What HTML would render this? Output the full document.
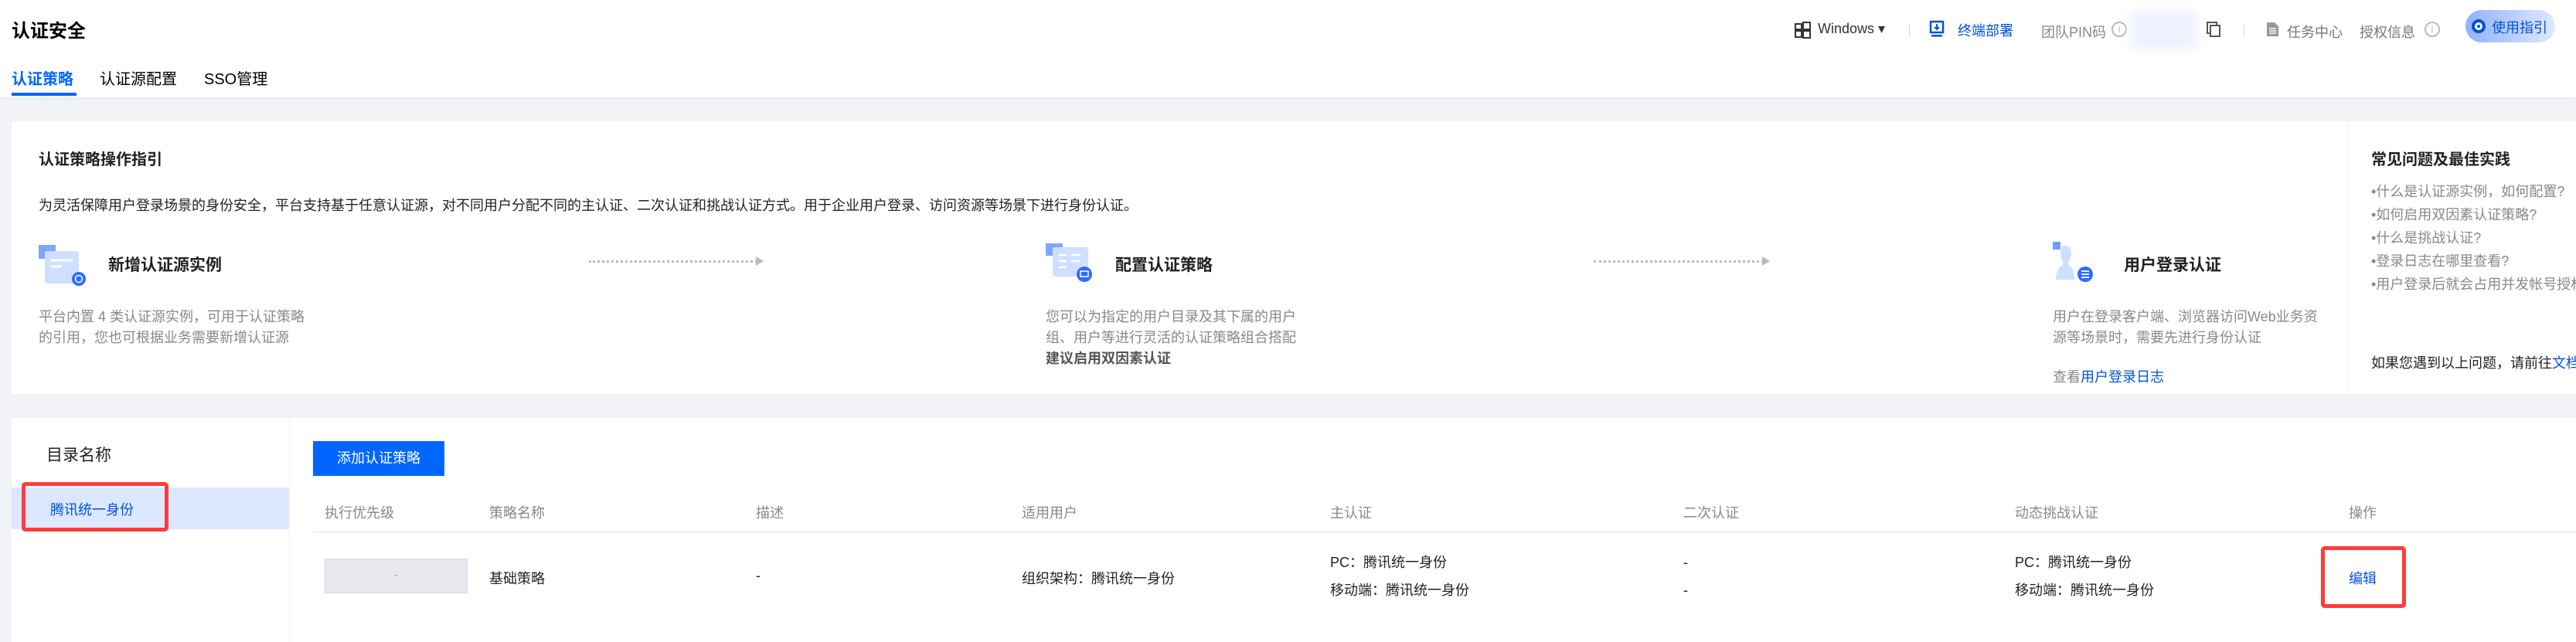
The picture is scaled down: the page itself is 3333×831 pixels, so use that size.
<!DOCTYPE html>
<html><head><meta charset="utf-8"><style>
*{margin:0;padding:0;box-sizing:border-box}
body{width:3333px;height:824px;background:#f2f3f7;font-family:"Liberation Sans","Noto Sans CJK SC",sans-serif;position:relative;overflow:hidden;color:#000}
.a{position:absolute;white-space:nowrap}
.g{color:#888}
.b{font-weight:bold}
.blue{color:#0052d9}
</style></head><body>
<div class="a" style="left:0;top:0;width:3333px;height:126px;background:#fff;box-shadow:0 2px 4px rgba(0,0,0,.05)"></div>
<div class="a b" style="left:15px;top:20px;font-size:24px;">认证安全</div>
<div class="a blue b" style="left:15px;top:86px;font-size:20px;color:#0066ff">认证策略</div>
<div class="a" style="left:15px;top:120px;width:84px;height:4px;background:#0066ff"></div>
<div class="a" style="left:129px;top:86px;font-size:20px;">认证源配置</div>
<div class="a" style="left:264px;top:86px;font-size:20px;">SSO管理</div>

<!-- top right -->
<svg class="a" style="left:2322px;top:28px" width="22" height="22" viewBox="0 0 22 22"><g fill="none" stroke="#333" stroke-width="2"><rect x="1" y="3" width="8" height="7"/><rect x="1" y="12" width="8" height="8"/><rect x="11" y="1" width="9" height="9"/><rect x="11" y="12" width="9" height="9"/></g></svg>
<div class="a" style="left:2352px;top:27px;font-size:18px;color:#333">Windows ▾</div>
<div class="a" style="left:2470px;top:30px;width:1px;height:18px;background:#ddd"></div>
<svg class="a" style="left:2496px;top:26px" width="20" height="22" viewBox="0 0 20 22"><rect x="2" y="2" width="16" height="14" fill="none" stroke="#0052d9" stroke-width="2.5"/><path d="M10 5v7M7 9l3 3 3-3" stroke="#0052d9" stroke-width="2" fill="none"/><rect x="3" y="19" width="14" height="2.5" fill="#0052d9"/></svg>
<div class="a" style="left:2533px;top:26px;font-size:18px;color:#0052d9">终端部署</div>
<div class="a g" style="left:2641px;top:28px;font-size:18px">团队PIN码</div>
<div class="a" style="left:2732px;top:28px;width:20px;height:20px;border:2px solid #bbb;border-radius:50%;font-size:13px;color:#bbb;text-align:center;line-height:16px">i</div>
<div class="a" style="left:2757px;top:16px;width:85px;height:48px;background:#edf2ff;filter:blur(6px)"></div>
<svg class="a" style="left:2855px;top:28px" width="18" height="20" viewBox="0 0 18 20"><rect x="1" y="1" width="12" height="14" fill="none" stroke="#555" stroke-width="2"/><rect x="5" y="5" width="12" height="14" fill="#fff" stroke="#555" stroke-width="2"/></svg>
<div class="a" style="left:2903px;top:30px;width:1px;height:18px;background:#ddd"></div>
<svg class="a" style="left:2932px;top:28px" width="17" height="20" viewBox="0 0 17 20"><path d="M1 1h10l5 5v13H1z" fill="#999"/><path d="M4 9h9M4 12h9M4 15h9" stroke="#fff" stroke-width="1.5"/></svg>
<div class="a" style="left:2959px;top:28px;font-size:18px;color:#777">任务中心</div>
<div class="a" style="left:3053px;top:28px;font-size:18px;color:#777">授权信息</div>
<div class="a" style="left:3137px;top:28px;width:20px;height:20px;border:2px solid #bbb;border-radius:50%;font-size:13px;color:#bbb;text-align:center;line-height:16px">i</div>
<div class="a" style="left:3190px;top:13px;width:116px;height:42px;border-radius:21px;background:linear-gradient(90deg,#8fb2ff,#dfe9ff)"></div>
<div class="a" style="left:3198px;top:25px;width:18px;height:18px;border-radius:50%;background:#0052d9;border:4px solid #0052d9"><div style="width:10px;height:10px;border-radius:50%;border:3px solid #fff;background:#0052d9"></div></div>
<div class="a" style="left:3224px;top:22px;font-size:18px;color:#0052d9">使用指引</div>

<!-- guide card -->
<div class="a" style="left:15px;top:157px;width:3320px;height:353px;background:#fff"></div>
<div class="a" style="left:3037px;top:157px;width:1px;height:353px;background:#eee"></div>
<div class="a b" style="left:50px;top:190px;font-size:20px;color:#222">认证策略操作指引</div>
<div class="a" style="left:50px;top:252px;font-size:18px;color:#222">为灵活保障用户登录场景的身份安全，平台支持基于任意认证源，对不同用户分配不同的主认证、二次认证和挑战认证方式。用于企业用户登录、访问资源等场景下进行身份认证。</div>

<svg class="a" style="left:50px;top:315px" width="64" height="56" viewBox="0 0 64 56"><rect x="0" y="2" width="22" height="18" fill="#7ea6ff"/><rect x="8" y="10" width="44" height="42" rx="3" fill="#cfdfff"/><path d="M16 22h28M16 30h14" stroke="#fff" stroke-width="3"/><circle cx="52" cy="46" r="9" fill="#2f6bff"/><circle cx="52" cy="46" r="4.5" fill="none" stroke="#fff" stroke-width="1.5"/></svg>
<div class="a b" style="left:140px;top:327px;font-size:21px;color:#222">新增认证源实例</div>
<div class="a" style="left:762px;top:337px;width:218px;border-top:3px dotted #bbb"></div>
<div class="a" style="left:978px;top:332px;width:0;height:0;border-left:10px solid #bbb;border-top:6px solid transparent;border-bottom:6px solid transparent"></div>
<div class="a g" style="left:50px;top:397px;font-size:18px;line-height:27px">平台内置 4 类认证源实例，可用于认证策略<br>的引用，您也可根据业务需要新增认证源</div>

<svg class="a" style="left:1353px;top:315px" width="64" height="56" viewBox="0 0 64 56"><rect x="0" y="0" width="22" height="16" fill="#7ea6ff"/><rect x="9" y="5" width="46" height="38" rx="3" fill="#cfdfff"/><path d="M17 15h10M33 15h12M17 23h10M33 23h12M17 31h10" stroke="#fff" stroke-width="2.5"/><circle cx="50" cy="40" r="10" fill="#2f6bff"/><rect x="45" y="36" width="10" height="7" fill="none" stroke="#fff" stroke-width="1.5"/></svg>
<div class="a b" style="left:1443px;top:327px;font-size:21px;color:#222">配置认证策略</div>
<div class="a" style="left:2062px;top:337px;width:220px;border-top:3px dotted #bbb"></div>
<div class="a" style="left:2280px;top:332px;width:0;height:0;border-left:10px solid #bbb;border-top:6px solid transparent;border-bottom:6px solid transparent"></div>
<div class="a g" style="left:1353px;top:397px;font-size:18px;line-height:27px">您可以为指定的用户目录及其下属的用户<br>组、用户等进行灵活的认证策略组合搭配<br><b style="color:#555">建议启用双因素认证</b></div>

<svg class="a" style="left:2656px;top:313px" width="54" height="56" viewBox="0 0 54 56"><rect x="0" y="0" width="10" height="10" fill="#6f9bff"/><path d="M12 6c6-3 12 0 12 10 0 6-4 10-4 13 6 4 8 10 8 20H4c0-10 3-16 10-20-2-4-6-16-2-23z" fill="#cfdfff"/><circle cx="42" cy="42" r="10" fill="#2f6bff"/><path d="M37 38h10M37 42h10M37 46h10" stroke="#fff" stroke-width="1.8"/></svg>
<div class="a b" style="left:2748px;top:327px;font-size:21px;color:#222">用户登录认证</div>
<div class="a g" style="left:2656px;top:397px;font-size:18px;line-height:27px">用户在登录客户端、浏览器访问Web业务资<br>源等场景时，需要先进行身份认证</div>
<div class="a g" style="left:2656px;top:474px;font-size:18px">查看<span class="blue">用户登录日志</span></div>

<div class="a b" style="left:3068px;top:190px;font-size:20px;color:#222">常见问题及最佳实践</div>
<div class="a g" style="left:3068px;top:233px;font-size:18px;line-height:30px">•什么是认证源实例，如何配置?<br>•如何启用双因素认证策略?<br>•什么是挑战认证?<br>•登录日志在哪里查看?<br>•用户登录后就会占用并发帐号授权吗?</div>
<div class="a" style="left:3068px;top:456px;font-size:18px;color:#222">如果您遇到以上问题，请前往<span class="blue">文档中心</span></div>

<!-- bottom -->
<div class="a" style="left:15px;top:541px;width:3320px;height:290px;background:#fff"></div>
<div class="a" style="left:374px;top:541px;width:1px;height:290px;background:#eee"></div>
<div class="a" style="left:60px;top:573px;font-size:21px;color:#222">目录名称</div>
<div class="a" style="left:15px;top:631px;width:359px;height:54px;background:#dce8ff"></div>
<div class="a" style="left:28px;top:624px;width:190px;height:64px;border:5px solid #ff3b3b;border-radius:5px"></div>
<div class="a" style="left:65px;top:646px;font-size:18px;color:#0052d9">腾讯统一身份</div>

<div class="a" style="left:405px;top:571px;width:170px;height:45px;background:#0066ff;color:#fff;font-size:18px;text-align:center;line-height:45px">添加认证策略</div>
<div class="a g" style="left:420px;top:650px;font-size:18px">执行优先级</div>
<div class="a g" style="left:633px;top:650px;font-size:18px">策略名称</div>
<div class="a g" style="left:978px;top:650px;font-size:18px">描述</div>
<div class="a g" style="left:1322px;top:650px;font-size:18px">适用用户</div>
<div class="a g" style="left:1721px;top:650px;font-size:18px">主认证</div>
<div class="a g" style="left:2178px;top:650px;font-size:18px">二次认证</div>
<div class="a g" style="left:2607px;top:650px;font-size:18px">动态挑战认证</div>
<div class="a g" style="left:3039px;top:650px;font-size:18px">操作</div>
<div class="a" style="left:405px;top:688px;width:2930px;height:2px;background:#f0f0f0"></div>

<div class="a" style="left:420px;top:723px;width:185px;height:45px;background:#e7e9ee;border:1px solid #d8dadf;color:#aaa;text-align:center;line-height:42px;font-size:16px">-</div>
<div class="a" style="left:633px;top:735px;font-size:18px;color:#222">基础策略</div>
<div class="a" style="left:978px;top:735px;font-size:18px;color:#222">-</div>
<div class="a" style="left:1322px;top:735px;font-size:18px;color:#222">组织架构：腾讯统一身份</div>
<div class="a" style="left:1721px;top:710px;font-size:18px;color:#222;line-height:36px">PC：腾讯统一身份<br>移动端：腾讯统一身份</div>
<div class="a" style="left:2178px;top:710px;font-size:18px;color:#222;line-height:36px">-<br>-</div>
<div class="a" style="left:2607px;top:710px;font-size:18px;color:#222;line-height:36px">PC：腾讯统一身份<br>移动端：腾讯统一身份</div>
<div class="a" style="left:3003px;top:707px;width:110px;height:80px;border:5px solid #ff3b3b;border-radius:5px"></div>
<div class="a" style="left:3039px;top:735px;font-size:18px;color:#0052d9">编辑</div>
</body></html>
